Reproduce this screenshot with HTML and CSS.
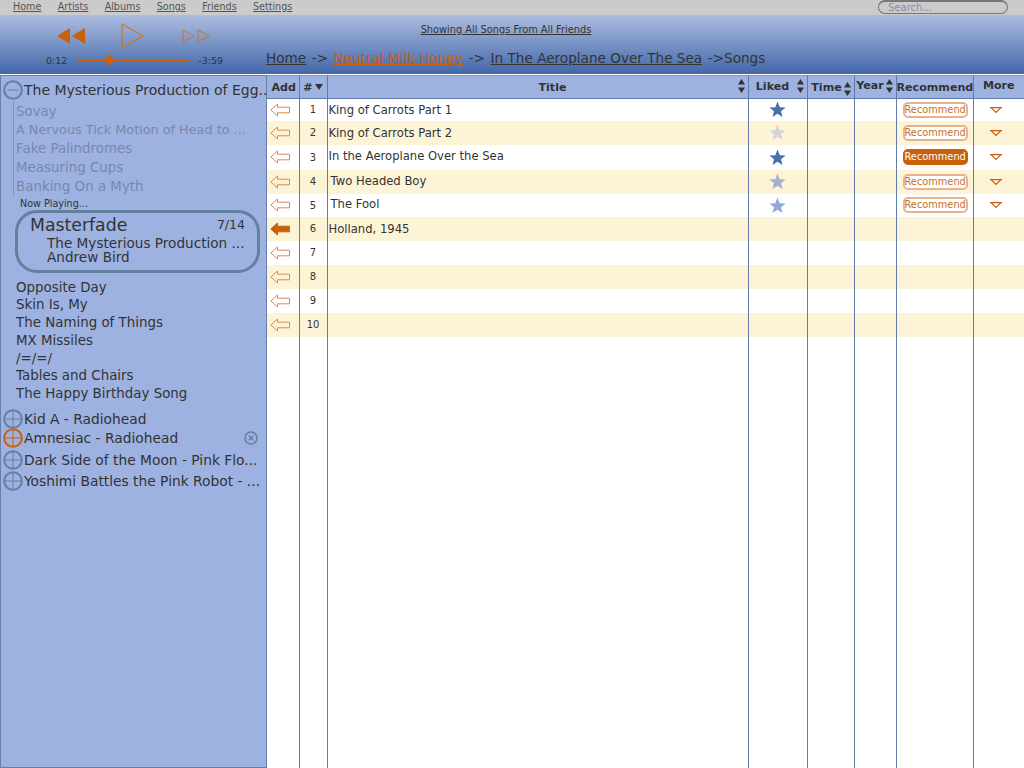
FILE: index.html
```html
<!DOCTYPE html>
<html lang="en">
<head>
  <meta charset="UTF-8">
  <title>Music Player</title>
  <link rel="stylesheet" href="styles.css">
</head>
<body>
  <svg class="defs" width="0" height="0">
    <symbol id="arrow" viewBox="0 0 20 14"><path d="M0.8 7 7.5 1V4.2H19.5V9.8H7.5V13Z"/></symbol>
    <symbol id="star" viewBox="0 0 18 18"><path d="M9 0.5 11.3 6.5 17.6 6.8 12.7 10.8 14.3 17 9 13.5 3.7 17 5.3 10.8 0.4 6.8 6.7 6.5Z"/></symbol>
    <symbol id="more" viewBox="0 0 12 6"><path d="M0 0.6H12M1 0.6 6 5.4 11 0.6"/></symbol>
    <symbol id="plus" viewBox="0 0 20 20"><circle cx="10" cy="10" r="8.8"/><path class="thin" d="M2 10H18M10 2V18"/></symbol>
    <symbol id="minus" viewBox="0 0 20 20"><circle cx="10" cy="10" r="8.8"/><path class="thin" d="M4.5 10H15.5"/></symbol>
    <symbol id="updown" viewBox="0 0 7 14"><path d="M3.5 0 7 5.5H0ZM3.5 14 0 8.5H7Z"/></symbol>
  </svg>

  <div class="topbar">
    <nav class="menu">
      <a href="#">Home</a>
      <a href="#">Artists</a>
      <a href="#">Albums</a>
      <a href="#">Songs</a>
      <a href="#">Friends</a>
      <a href="#">Settings</a>
    </nav>
    <div class="search">Search...</div>
  </div>

  <header class="player">
    <div class="controls">
      <div class="buttons">
        <svg class="btn-prev" width="28" height="16" viewBox="0 0 28 16"><path d="M0 8 13 0V16ZM15 8 28 0V16Z"/></svg>
        <svg class="btn-play" width="23" height="26" viewBox="0 0 23 26"><path d="M1 1 22 13 1 25Z"/></svg>
        <svg class="btn-next" width="28" height="14" viewBox="0 0 28 14"><path d="M1 1 12 7 1 13ZM16 1 27 7 16 13Z"/></svg>
      </div>
      <div class="progress">
        <span>0:12</span>
        <div class="track"><div class="thumb"></div></div>
        <span>-3:59</span>
      </div>
    </div>
    <div class="now-info">
      <a class="showing" href="#">Showing All Songs From All Friends</a>
      <div class="crumbs">
        <a href="#">Home</a> <span>-&gt;</span> <a class="current" href="#">Neutral Milk Honey</a> <span>-&gt;</span> <a href="#">In The Aeroplane Over The Sea</a> <span>-&gt;Songs</span>
      </div>
    </div>
  </header>

  <main class="content">
    <aside class="sidebar">
      <div class="album album-open">
        <svg class="toggle"><use href="#minus"/></svg>
        <span>The Mysterious Production of Egg...</span>
      </div>
      <ul class="tracks played">
        <li>Sovay</li>
        <li class="track-long">A Nervous Tick Motion of Head to ...</li>
        <li>Fake Palindromes</li>
        <li>Measuring Cups</li>
        <li>Banking On a Myth</li>
      </ul>
      <div class="now-label">Now Playing...</div>
      <div class="now-card">
        <div class="now-head"><span class="now-title">Masterfade</span><span class="now-count">7/14</span></div>
        <div class="now-line">The Mysterious Production ...</div>
        <div class="now-line">Andrew Bird</div>
      </div>
      <ul class="tracks upcoming">
        <li>Opposite Day</li>
        <li>Skin Is, My</li>
        <li>The Naming of Things</li>
        <li>MX Missiles</li>
        <li>/=/=/</li>
        <li>Tables and Chairs</li>
        <li>The Happy Birthday Song</li>
      </ul>
      <div class="albums">
        <div class="album album-first"><svg class="toggle"><use href="#plus"/></svg><span>Kid A - Radiohead</span></div>
        <div class="album album-hover">
          <svg class="toggle"><use href="#plus"/></svg><span>Amnesiac - Radiohead</span>
          <svg class="remove" width="14" height="14" viewBox="0 0 14 14"><circle cx="7" cy="7" r="6"/><path d="M4.8 4.8 9.2 9.2M9.2 4.8 4.8 9.2"/></svg>
        </div>
        <div class="album"><svg class="toggle"><use href="#plus"/></svg><span>Dark Side of the Moon - Pink Flo...</span></div>
        <div class="album"><svg class="toggle"><use href="#plus"/></svg><span>Yoshimi Battles the Pink Robot - ...</span></div>
      </div>
    </aside>

    <table class="songs">
      <colgroup>
        <col class="c-add"><col class="c-num"><col><col class="c-liked"><col class="c-time"><col class="c-year"><col class="c-rec"><col class="c-more">
      </colgroup>
      <thead>
        <tr>
          <th class="h-add">Add</th>
          <th><span class="num-head">#<i class="down"></i></span></th>
          <th class="sortable h-title">Title<svg class="sort"><use href="#updown"/></svg></th>
          <th class="sortable h-liked">Liked<svg class="sort"><use href="#updown"/></svg></th>
          <th class="sortable h-time">Time<svg class="sort sort-low"><use href="#updown"/></svg></th>
          <th class="sortable h-year">Year<svg class="sort"><use href="#updown"/></svg></th>
          <th>Recommend</th>
          <th class="h-more">More</th>
        </tr>
      </thead>
      <tbody>
        <tr>
          <td class="add"><svg class="arrow"><use href="#arrow"/></svg></td><td class="num">1</td><td class="title">King of Carrots Part 1</td>
          <td class="liked"><svg class="star star-on"><use href="#star"/></svg></td><td></td><td></td>
          <td class="rec"><span class="rec-btn">Recommend</span></td><td class="more"><svg class="more-icon"><use href="#more"/></svg></td>
        </tr>
        <tr>
          <td class="add"><svg class="arrow"><use href="#arrow"/></svg></td><td class="num">2</td><td class="title">King of Carrots Part 2</td>
          <td class="liked"><svg class="star star-off"><use href="#star"/></svg></td><td></td><td></td>
          <td class="rec"><span class="rec-btn">Recommend</span></td><td class="more"><svg class="more-icon"><use href="#more"/></svg></td>
        </tr>
        <tr>
          <td class="add"><svg class="arrow"><use href="#arrow"/></svg></td><td class="num">3</td><td class="title title-up">In the Aeroplane Over the Sea</td>
          <td class="liked"><svg class="star star-on"><use href="#star"/></svg></td><td></td><td></td>
          <td class="rec"><span class="rec-btn rec-on">Recommend</span></td><td class="more"><svg class="more-icon"><use href="#more"/></svg></td>
        </tr>
        <tr>
          <td class="add"><svg class="arrow"><use href="#arrow"/></svg></td><td class="num">4</td><td class="title title-in title-up">Two Headed Boy</td>
          <td class="liked"><svg class="star star-mid"><use href="#star"/></svg></td><td></td><td></td>
          <td class="rec"><span class="rec-btn">Recommend</span></td><td class="more"><svg class="more-icon"><use href="#more"/></svg></td>
        </tr>
        <tr>
          <td class="add"><svg class="arrow"><use href="#arrow"/></svg></td><td class="num">5</td><td class="title title-in title-up">The Fool</td>
          <td class="liked"><svg class="star star-light"><use href="#star"/></svg></td><td></td><td></td>
          <td class="rec"><span class="rec-btn">Recommend</span></td><td class="more"><svg class="more-icon"><use href="#more"/></svg></td>
        </tr>
        <tr>
          <td class="add"><svg class="arrow arrow-on"><use href="#arrow"/></svg></td><td class="num">6</td><td class="title">Holland, 1945</td>
          <td></td><td></td><td></td><td></td><td></td>
        </tr>
        <tr><td class="add"><svg class="arrow"><use href="#arrow"/></svg></td><td class="num">7</td><td></td><td></td><td></td><td></td><td></td><td></td></tr>
        <tr><td class="add"><svg class="arrow"><use href="#arrow"/></svg></td><td class="num">8</td><td></td><td></td><td></td><td></td><td></td><td></td></tr>
        <tr><td class="add"><svg class="arrow"><use href="#arrow"/></svg></td><td class="num">9</td><td></td><td></td><td></td><td></td><td></td><td></td></tr>
        <tr><td class="add"><svg class="arrow"><use href="#arrow"/></svg></td><td class="num">10</td><td></td><td></td><td></td><td></td><td></td><td></td></tr>
        <tr class="filler"><td></td><td></td><td></td><td></td><td></td><td></td><td></td><td></td></tr>
      </tbody>
    </table>
  </main>
</body>
</html>
```

FILE: styles.css
```css
html, body {
  height: 100%;
}

body {
  margin: 0;
  display: flex;
  flex-direction: column;
  height: 768px;
  overflow: hidden;
  background-color: #fff;
  font-family: "DejaVu Sans", sans-serif;
  color: #333;
}

a {
  color: #333;
}

.defs {
  position: absolute;
}

/* top menu */
.topbar {
  flex: none;
  display: flex;
  justify-content: space-between;
  height: 15px;
  background-color: #cbcbcb;
}

.menu {
  display: flex;
  gap: 16.3px;
  padding-left: 13px;
  font-size: 9.6px;
  line-height: 13px;
}

.menu a {
  color: #555;
}

.search {
  box-sizing: border-box;
  width: 130px;
  height: 14px;
  margin-right: 16px;
  padding-left: 9px;
  border: 1px solid #777;
  border-top-width: 2px;
  border-radius: 8px;
  font-size: 10px;
  line-height: 11px;
  color: #8c8cb4;
}

/* player header */
.player {
  flex: none;
  display: flex;
  box-sizing: border-box;
  height: 60px;
  border-bottom: 1px solid #fff;
  background: linear-gradient(#adbde0, #4267a8);
}

.controls {
  flex: none;
  width: 266px;
  padding-left: 46px;
  box-sizing: border-box;
}

.buttons {
  display: flex;
  align-items: center;
  height: 36px;
  padding-top: 6px;
  box-sizing: border-box;
}

.btn-prev {
  margin-left: 11px;
  fill: #c9600c;
}

.btn-play {
  margin-left: 36px;
  fill: none;
  stroke: #cd7327;
  stroke-width: 1.2;
}

.btn-next {
  margin-left: 38px;
  fill: none;
  stroke: #cd7327;
}

.progress {
  display: flex;
  align-items: center;
  gap: 10px;
  margin-top: 4px;
  font-size: 9.5px;
  color: #333;
}

.track {
  position: relative;
  width: 113px;
  height: 3px;
  margin-right: -2px;
  background-color: #c9600c;
}

.thumb {
  position: absolute;
  left: 28px;
  top: -3px;
  width: 8px;
  height: 8px;
  background-color: #c9600c;
  transform: rotate(45deg);
}

.now-info {
  flex: 1;
}

.showing {
  display: block;
  margin-top: 8px;
  padding-right: 278px;
  text-align: center;
  font-size: 9.8px;
  line-height: 13px;
}

.crumbs {
  margin-top: 13px;
  font-size: 13.6px;
  line-height: 18px;
  white-space: nowrap;
}

.crumbs span {
  margin: 0 1.25px;
}

.crumbs .current {
  color: #c9600c;
}

/* main area */
.content {
  flex: 1;
  display: flex;
  min-height: 0;
}

.sidebar {
  flex: none;
  box-sizing: border-box;
  width: 267px;
  padding: 3px 0 0 2px;
  border: 1px solid #6480ad;
  background-color: #9db2e0;
  font-size: 13.8px;
  color: #333;
}

.album {
  display: flex;
  align-items: center;
  height: 21px;
  white-space: nowrap;
}

.album-open {
  height: 22px;
  font-size: 14px;
}

.album-first {
  height: 20px;
}

.toggle {
  flex: none;
  width: 20px;
  height: 20px;
  margin-right: 1px;
  fill: none;
  stroke: #64809f;
  stroke-width: 2;
}

.thin {
  stroke-width: 1;
}

.tracks {
  margin: 0;
  padding: 0 0 0 13px;
  list-style: none;
  font-size: 13.4px;
  white-space: nowrap;
}

.played {
  margin-left: 10px;
  padding-left: 2px;
  padding-top: 1.5px;
  border-left: 1px solid #7f93bd;
  line-height: 18.75px;
  color: #7b86ad;
}

.track-long {
  font-size: 12.8px;
}

.upcoming {
  margin-top: 6px;
  line-height: 17.7px;
}

.now-label {
  margin: 1.5px 0 0 17px;
  font-size: 9.6px;
  line-height: 12px;
}

.now-card {
  box-sizing: border-box;
  width: 245px;
  height: 63px;
  margin: 0 0 0 12px;
  padding: 1px 12px 0 12px;
  border: 3px solid #64809f;
  border-radius: 22px;
}

.now-head {
  display: flex;
  justify-content: space-between;
  align-items: center;
}

.now-title {
  font-size: 17.3px;
  line-height: 22px;
}

.now-count {
  font-size: 12.5px;
}

.now-line {
  margin-left: 17px;
  font-size: 13.6px;
  line-height: 14px;
  white-space: nowrap;
}

.albums {
  margin-top: 6px;
}

.album-hover {
  position: relative;
  height: 19px;
  margin-bottom: 2px;
}

.album-hover .toggle {
  stroke: #c9600c;
}

.remove {
  position: absolute;
  right: 8px;
  top: 2px;
  fill: none;
  stroke: #64809f;
  stroke-width: 1.5;
}

/* song table */
.songs {
  flex: none;
  width: 757px;
  table-layout: fixed;
  border-collapse: collapse;
  height: 100%;
  font-size: 11.6px;
}

.c-add { width: 32px; }
.c-num { width: 28px; }
.c-liked { width: 59px; }
.c-time { width: 47px; }
.c-year { width: 42px; }
.c-rec { width: 77px; }
.c-more { width: 51px; }

.songs th {
  box-sizing: border-box;
  height: 23px;
  padding: 0;
  border: 1px solid #5f7cab;
  border-top: 1px solid #8399c4;
  background-color: #9db2e0;
  font-size: 11.1px;
  color: #333;
  white-space: nowrap;
}

.songs th:first-child,
.songs td:first-child {
  border-left: 0;
}

.songs th:last-child,
.songs td:last-child {
  border-right: 0;
}

.songs th.h-add { padding-left: 2px; }
.songs th.h-title { padding-left: 30px; }
.songs th.h-liked { padding-right: 10px; padding-bottom: 1px; }
.songs th.h-time { padding-right: 8px; }
.songs th.h-year { padding-right: 10px; padding-bottom: 3px; }
.songs th.h-more { padding-bottom: 3px; }

.sortable {
  position: relative;
}

.sort {
  position: absolute;
  right: 3px;
  top: 3px;
  width: 7px;
  height: 14px;
  fill: #333;
}

.sort-low {
  top: 6px;
}

.num-head {
  display: inline-flex;
  align-items: center;
  gap: 2px;
}

.down {
  width: 0;
  height: 0;
  border-left: 4px solid transparent;
  border-right: 4px solid transparent;
  border-top: 6px solid #333;
}

.songs td {
  box-sizing: border-box;
  height: 24px;
  padding: 0;
  border-left: 1px solid #5f7cab;
  border-right: 1px solid #5f7cab;
  vertical-align: middle;
}

.songs tbody tr:first-child td {
  height: 22px;
}

.songs tbody tr:nth-child(3) td {
  height: 25px;
}

.songs tbody tr:nth-child(5) td {
  height: 23px;
}

.songs tbody tr:nth-child(even) td {
  background-color: #fdf4d8;
}

.songs tbody tr.filler td {
  height: auto;
  background-color: #fff;
}

.liked,
.rec {
  text-align: center;
}

.num {
  text-align: center;
  font-size: 10px;
}

.songs td.title {
  padding-left: 1px;
  white-space: nowrap;
}

.songs td.title-in {
  padding-left: 3px;
}

.songs td.title-up {
  padding-bottom: 2px;
}

.arrow {
  display: block;
  width: 20px;
  height: 14px;
  margin-left: 3px;
  fill: none;
  stroke: #de8b4c;
}

.arrow-on {
  fill: #c9600c;
  stroke: #c9600c;
}

.star {
  display: block;
  width: 17px;
  height: 17px;
  margin: 0 auto;
}

.star-on { fill: #4a6fb0; }
.star-off { fill: #d2d5d3; }
.star-mid { fill: #a3b2cc; }
.star-light { fill: #92a9d6; }

.rec-btn {
  display: block;
  box-sizing: border-box;
  width: 65px;
  height: 16px;
  margin-left: 6px;
  border: 2px solid #e6b48c;
  border-radius: 5px;
  font-size: 9.8px;
  line-height: 12px;
  color: #c9701f;
  background-color: #fff;
}

.rec-on {
  border-color: #c9600c;
  background-color: #c9600c;
  color: #fff;
}

.more-icon {
  display: block;
  width: 12px;
  height: 6px;
  margin-left: 16px;
  fill: none;
  stroke: #c9600c;
  stroke-width: 1.2;
}
```
